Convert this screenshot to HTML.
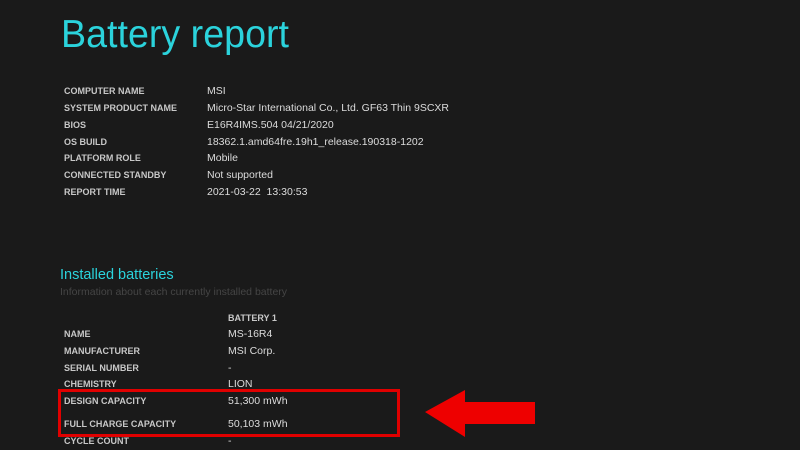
<!DOCTYPE html>
<html><head><meta charset="utf-8"><style>
body{margin:0;width:800px;height:450px;background:#1a1a1a;overflow:hidden;position:relative;font-family:"Liberation Sans",sans-serif}
.t{position:absolute;white-space:nowrap}
.title{left:61px;top:13px;font-size:39px;color:#2bd3dc;transform:scaleX(0.965);transform-origin:left}
.l{font-size:9px;font-weight:bold;color:#c8c8c8;left:64px}
.v{font-size:10.5px;color:#dcdcdc;left:207px}
.v2{font-size:10.5px;color:#dcdcdc;left:228px}
</style></head><body>
<div class="t title">Battery report</div>
<div class="t l" style="top:86px">COMPUTER NAME</div><div class="t v" style="top:85px">MSI</div>
<div class="t l" style="top:103px">SYSTEM PRODUCT NAME</div><div class="t v" style="top:102px">Micro-Star International Co., Ltd. GF63 Thin 9SCXR</div>
<div class="t l" style="top:120px">BIOS</div><div class="t v" style="top:119px">E16R4IMS.504 04/21/2020</div>
<div class="t l" style="top:137px">OS BUILD</div><div class="t v" style="top:136px">18362.1.amd64fre.19h1_release.190318-1202</div>
<div class="t l" style="top:153px">PLATFORM ROLE</div><div class="t v" style="top:152px">Mobile</div>
<div class="t l" style="top:170px">CONNECTED STANDBY</div><div class="t v" style="top:169px">Not supported</div>
<div class="t l" style="top:187px">REPORT TIME</div><div class="t v" style="top:186px">2021-03-22&nbsp;&nbsp;13:30:53</div>
<div class="t" style="left:60px;top:267px;font-size:14.5px;color:#2bd3dc">Installed batteries</div>
<div class="t" style="left:60px;top:286px;font-size:10.5px;color:#454545">Information about each currently installed battery</div>
<div class="t l" style="left:228px;top:313px">BATTERY 1</div>
<div class="t l" style="top:329px">NAME</div><div class="t v2" style="top:328px">MS-16R4</div>
<div class="t l" style="top:346px">MANUFACTURER</div><div class="t v2" style="top:345px">MSI Corp.</div>
<div class="t l" style="top:363px">SERIAL NUMBER</div><div class="t v2" style="top:362px">-</div>
<div class="t l" style="top:379px">CHEMISTRY</div><div class="t v2" style="top:378px">LION</div>
<div class="t l" style="top:396px">DESIGN CAPACITY</div><div class="t v2" style="top:395px">51,300 mWh</div>
<div class="t l" style="top:419px">FULL CHARGE CAPACITY</div><div class="t v2" style="top:418px">50,103 mWh</div>
<div class="t l" style="top:436px">CYCLE COUNT</div><div class="t v2" style="top:435px">-</div>
<div style="position:absolute;left:58px;top:389px;width:336px;height:42px;border:3px solid #e00000"></div>
<svg style="position:absolute;left:0;top:0" width="800" height="450"><polygon points="425,412 465,390 465,402 535,402 535,424 465,424 465,437" fill="#ee0000"/></svg>
</body></html>
